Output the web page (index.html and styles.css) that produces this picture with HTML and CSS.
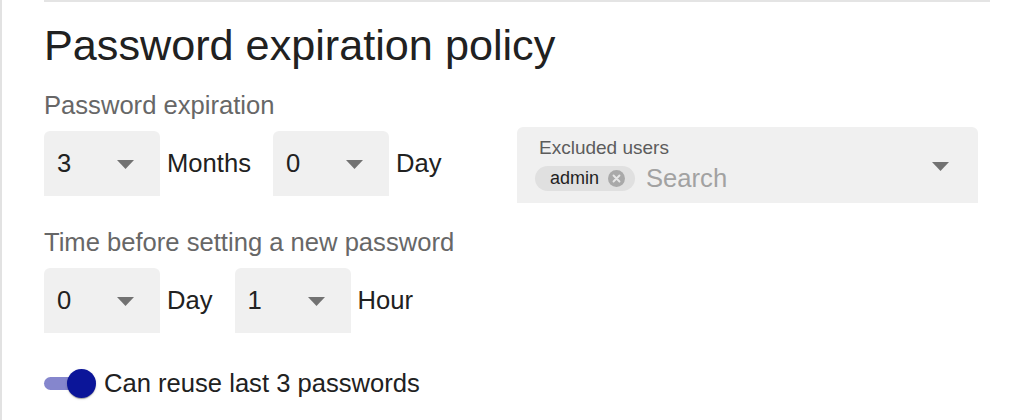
FILE: index.html
```html
<!DOCTYPE html>
<html lang="en">
<head>
<meta charset="utf-8">
<title>Password expiration policy</title>
<link rel="stylesheet" href="styles.css">
</head>
<body>
<div class="page">
  <section class="section">
    <h2 class="title">Password expiration policy</h2>

    <div class="field-label">Password expiration</div>
    <div class="row row-split">
      <div class="inline-group">
        <div class="select">
          <span class="select-value">3</span>
          <svg class="arrow" width="17" height="9" viewBox="0 0 17 9"><path d="M0 0h17L8.5 9z"/></svg>
        </div>
        <span class="unit">Months</span>
        <div class="select">
          <span class="select-value">0</span>
          <svg class="arrow" width="17" height="9" viewBox="0 0 17 9"><path d="M0 0h17L8.5 9z"/></svg>
        </div>
        <span class="unit">Day</span>
      </div>
      <div class="multi">
        <div class="multi-body">
          <div class="multi-label">Excluded users</div>
          <div class="multi-input">
            <span class="chip">
              <span class="chip-text">admin</span>
              <svg class="chip-del" width="17" height="17" viewBox="0 0 16 16"><circle cx="8" cy="8" r="8"/><path d="M5.2 5.2l5.6 5.6M10.8 5.2l-5.6 5.6"/></svg>
            </span>
            <span class="search">Search</span>
          </div>
        </div>
        <svg class="arrow" width="17" height="9" viewBox="0 0 17 9"><path d="M0 0h17L8.5 9z"/></svg>
      </div>
    </div>

    <div class="field-label label-2">Time before setting a new password</div>
    <div class="row">
      <div class="inline-group">
        <div class="select">
          <span class="select-value">0</span>
          <svg class="arrow" width="17" height="9" viewBox="0 0 17 9"><path d="M0 0h17L8.5 9z"/></svg>
        </div>
        <span class="unit">Day</span>
        <div class="select">
          <span class="select-value">1</span>
          <svg class="arrow" width="17" height="9" viewBox="0 0 17 9"><path d="M0 0h17L8.5 9z"/></svg>
        </div>
        <span class="unit">Hour</span>
      </div>
    </div>

    <label class="toggle-row">
      <span class="switch">
        <span class="switch-track"></span>
        <span class="switch-thumb"></span>
      </span>
      <span class="toggle-text">Can reuse last 3 passwords</span>
    </label>
  </section>
</div>
</body>
</html>
```

FILE: styles.css
```css
* { box-sizing: border-box; }

html, body {
  margin: 0;
  padding: 0;
  background: #ffffff;
}

body {
  font-family: "Liberation Sans", Arial, Helvetica, sans-serif;
  color: #212121;
}

.page {
  border-left: 2px solid #e2e2e2;
  min-height: 420px;
  padding: 0 44px 0 42px;
}

.section {
  border-top: 2px solid #e4e4e4;
}

.title {
  margin: 17px 0 0;
  font-size: 43.2px;
  line-height: 52px;
  font-weight: 400;
  color: #212121;
}

.field-label {
  margin-top: 15px;
  margin-bottom: 6.6px;
  font-size: 25.6px;
  line-height: 38.4px;
  color: #676767;
}

.label-2 {
  margin-top: 20px;
}

.row {
  display: flex;
  align-items: flex-start;
}

.row-split {
  display: grid;
  grid-template-columns: 1fr 1fr;
}

.inline-group {
  display: flex;
  align-items: center;
}

.select {
  display: flex;
  align-items: center;
  width: 116px;
  height: 65px;
  padding: 0 26px 0 13px;
  background: #f0f0f0;
  border-radius: 6px 6px 0 0;
  font-size: 25.6px;
  color: #212121;
}

.select-value {
  flex: 1;
}

.arrow {
  display: block;
  fill: #727272;
  flex: none;
}

.select .arrow {
  margin-top: 2px;
}

.unit {
  margin: 0 22px 0 7px;
  font-size: 25.6px;
  color: #212121;
}

.multi {
  display: flex;
  align-items: center;
  margin: -4px 12px 0 0;
  height: 76px;
  padding: 9px 29px 9px 22px;
  background: #f0f0f0;
  border-radius: 6px 6px 0 0;
}

.multi-body {
  flex: 1;
  display: flex;
  flex-direction: column;
}

.multi .arrow {
  margin-top: 2px;
}

.multi-label {
  font-size: 19px;
  line-height: 23px;
  color: #5c5c5c;
}

.multi-input {
  display: flex;
  align-items: center;
  height: 31px;
  margin-top: 4px;
  margin-left: -4px;
}

.chip {
  display: inline-flex;
  align-items: center;
  height: 25px;
  padding: 0 10px 0 15px;
  background: #e0e0e0;
  border-radius: 13px;
}

.chip-text {
  font-size: 18px;
  color: #1e1e1e;
}

.chip-del {
  display: block;
  margin-left: 9px;
}

.chip-del circle {
  fill: #a9a9a9;
}

.chip-del path {
  stroke: #e6e6e6;
  stroke-width: 1.8;
  stroke-linecap: round;
}

.search {
  margin-left: 11px;
  font-size: 25.6px;
  color: #a2a2a2;
}

.toggle-row {
  display: flex;
  align-items: center;
  height: 38px;
  margin-top: 31px;
}

.switch {
  position: relative;
  display: block;
  width: 52px;
  height: 29px;
  flex: none;
}

.switch-track {
  position: absolute;
  left: 0;
  top: 8px;
  width: 46px;
  height: 13px;
  border-radius: 7px;
  background: #8586cd;
}

.switch-thumb {
  position: absolute;
  right: 0;
  top: 0;
  width: 29px;
  height: 29px;
  border-radius: 50%;
  background: #0b1599;
  box-shadow: 0 2px 1px -1px rgba(0,0,0,0.2), 0 1px 1px 0 rgba(0,0,0,0.14), 0 1px 3px 0 rgba(0,0,0,0.12);
}

.toggle-text {
  margin-left: 8px;
  font-size: 25.6px;
  color: #212121;
}
```
